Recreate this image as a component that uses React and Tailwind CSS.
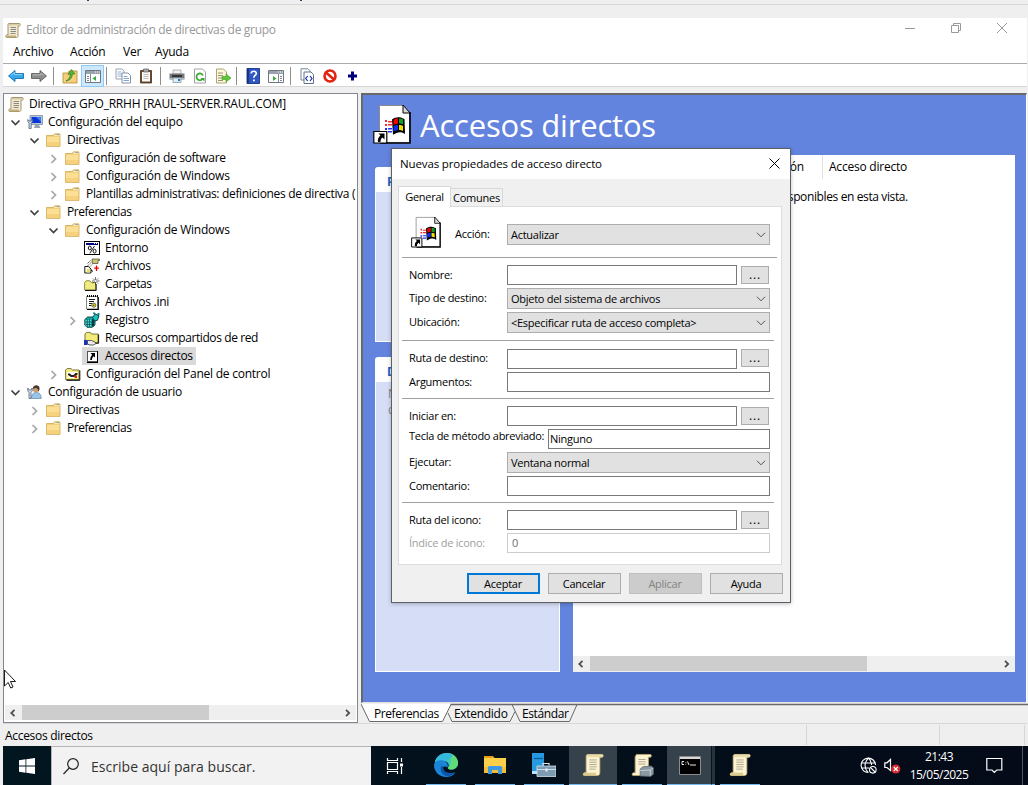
import React from "react";

/* ---------- shared icons ---------- */

function Scroll({ className }) {
  return (
    <svg viewBox="0 0 24 26" className={className}>
      <path d="M6 1.500h16c1.500 0 1.700 2.500 0 3h-2.500v16.500c0 2.500-1 3.500-2.500 3.500H2.500c-1.500 0-1.700-2.500 0-3H4.500V4c0-1.500.5-2.500 1.500-2.500z" fill="#fbf3d2" stroke="#bfac74" strokeWidth="0.9" />
      <path d="M6 1.500c-1 .8-1 2 0 3h16c1-.5 1-2.500 0-3z" fill="#e9dcab" />
      <path d="M2.500 21.500h13c-.6 1 0 2.600 1.500 3H2.500c-1.500-.5-1.500-2.500 0-3z" fill="#dccb8d" />
      <path d="M8 7.500h8M8 10h8M8 12.500h8M8 15h8M8 17.500h7" stroke="#a9a28c" strokeWidth="1" />
    </svg>
  );
}

function SmallScroll() {
  return (
    <svg viewBox="0 0 16 17" className="h-[17px] w-4">
      <path d="M4 1.500h10.500c1 0 1 2.500 0 2.500H13v9.500c0 1.500-.7 2-1.500 2H1.500c-1 0-1-2.500 0-2.500H3V3c0-1 .3-1.500 1-1.500z" fill="#f3ead0" stroke="#9a8b64" strokeWidth="0.9" />
      <path d="M4 2h10.500v1.500H4z" fill="#d8cba2" />
      <path d="M1.500 13.500h9.500v1.700H1.500z" fill="#c3b078" />
      <path d="M5.500 5.500h5.500M5.500 7.500h5.500M5.500 9.500h5.500M5.500 11.500h5" stroke="#7d7d80" strokeWidth="0.9" />
    </svg>
  );
}

function Folder() {
  return (
    <svg viewBox="0 0 16 16" className="h-4 w-4">
      <path d="M.5 3.500H7l1.500-2h5v12.500h-13z" fill="#e9bf62" />
      <path d="M8 2h6v2H8z" fill="#f7e7b5" />
      <path d="M10.500 2H13v1h-2.500z" fill="#4aa3e8" />
      <path d="M.5 4.500h13.500v9H.5z" fill="#fbdf95" />
      <path d="M.5 10h13.500v3.500H.5z" fill="#f7d27e" />
      <path d="M.4 3.500h7l1-1.500H14v12.500H.4z" fill="none" stroke="#d6aa50" strokeWidth="0.8" />
    </svg>
  );
}

function ComputerIcon() {
  return (
    <svg viewBox="0 0 16 16" className="h-4 w-4">
      <path d="M3 1.500h12.500v9H3z" fill="#b7c3d6" stroke="#7f8da5" strokeWidth="0.8" />
      <path d="M4.500 3H14v6H4.500z" fill="#0a35d8" />
      <path d="M9 3h5v5z" fill="#3e7cf2" />
      <path d="M8 11h4l1.500 3H7z" fill="#97a1b0" />
      <path d="M.8 5.500v2L2 9v5.500h2.200V9l1.300-1.500v-2L4.200 7H2z" fill="#c9d6e6" stroke="#506784" strokeWidth="0.8" />
    </svg>
  );
}

function UserIcon() {
  return (
    <svg viewBox="0 0 16 16" className="h-4 w-4">
      <path d="M4.500 14.500c0-4.500 2-6 4.700-6s5 1.500 5 6z" fill="#9cc3e8" stroke="#5c86ae" strokeWidth="0.7" />
      <circle cx="9" cy="5" r="3.200" fill="#c99a70" />
      <path d="M5.800 5c0-4.500 6.300-5 6.700-1 .2 2-.6 3-1.200 3.500 0-2-.8-3.300-2.700-3.500C7.200 4 6.800 5 5.800 5z" fill="#4a3a30" />
      <path d="M.8 4v3L2 8.500V14.500h2V8.500L5.200 7V4L4 6H2z" fill="#d5dfeb" stroke="#4f6680" strokeWidth="0.8" />
    </svg>
  );
}

function EnvIcon() {
  return (
    <svg viewBox="0 0 16 16" className="h-4 w-4">
      <path d="M.5 1.500h15v13H.5z" fill="#fff" stroke="#000" shapeRendering="crispEdges" />
      <path d="M2 3h12v1.500H2z" fill="#000084" shapeRendering="crispEdges" />
      <path d="M10 3h1v1h-1zM12 3h1v1h-1z" fill="#fff" />
      <path d="M10.500 6L5.800 13.300" stroke="#000" strokeWidth="0.9" />
      <ellipse cx="5.800" cy="8" rx="1.500" ry="1.900" fill="none" stroke="#000" strokeWidth="0.9" />
      <ellipse cx="10.600" cy="11.200" rx="1.500" ry="1.900" fill="none" stroke="#000" strokeWidth="0.9" />
    </svg>
  );
}

function FilesIcon() {
  return (
    <svg viewBox="0 0 16 16" className="h-4 w-4">
      <path d="M8 1h7.500v1.500H14v3H8.500z" fill="#c9c66b" stroke="#444" strokeWidth="0.7" />
      <path d="M6.500 2.500L3 6M7.500 4L3.500 8M8.500 6L5 9.500" stroke="#333" strokeWidth="0.8" strokeDasharray="1.500 .7" />
      <path d="M.8 8.500h3.500L7 11v4H.8z" fill="#fff" stroke="#000" strokeWidth="0.9" />
      <path d="M3 11h3v3.500H3z" fill="#e5df5e" />
      <path d="M12.500 7.500v5.500M10.200 10.200h4.600" stroke="#f00000" strokeWidth="1.300" />
      <path d="M7 12l2 1.500" stroke="#000" />
    </svg>
  );
}

function NewFolderIcon() {
  return (
    <svg viewBox="0 0 16 16" className="h-4 w-4">
      <path d="M.6 13.800V6.500L2 4.800h4L7.200 6.500h4.300v7.300z" fill="#f1ec82" stroke="#8a8530" strokeWidth="0.9" />
      <path d="M1 14.500h11.200V8" stroke="#000" strokeWidth="0.9" fill="none" />
      <path d="M11.500 1v8M8 5h7.500M9 2.500l5 5M14 2.500l-5 5" stroke="#333" strokeWidth="0.7" />
      <circle cx="11.500" cy="5" r="1.100" fill="#fff" />
    </svg>
  );
}

function IniIcon() {
  return (
    <svg viewBox="0 0 16 16" className="h-4 w-4">
      <path d="M2.500 2.500h11v12.500h-11z" fill="#fff" stroke="#777" strokeWidth="0.9" />
      <path d="M14.300 3v12.500H3" fill="none" stroke="#000" strokeWidth="1.100" />
      <path d="M3 2h11" stroke="#000" strokeDasharray="1 1" strokeWidth="1.800" />
      <path d="M5 5.500h6M5 7.500h5M5 9.500h3M5 11.500h2.500" stroke="#000" strokeWidth="0.9" />
      <circle cx="9.800" cy="11.200" r="2.100" fill="#e4da24" stroke="#555" strokeWidth="0.8" />
      <path d="M9.300 10.700h1v1h-1z" fill="#000" />
    </svg>
  );
}

function RegistryIcon() {
  return (
    <svg viewBox="0 0 16 16" className="h-4 w-4">
      <path d="M.8 7.500L3.500 5h4.700L11 6.500V13l-3 2.300H3L.8 13z" fill="#0fa9a9" stroke="#063c3c" strokeWidth="0.9" />
      <path d="M1.500 8h5.500v6.500H2.500L1.500 13z" fill="#4fdede" />
      <path d="M1 10h7M1.500 12.500h6.500M3.300 7v8M5.500 7v8" stroke="#0a5050" strokeWidth="0.8" />
      <path d="M8.500 5.500l2.700-3.700 3.800 2-1.500 4.400-3 1z" fill="#18c0c0" stroke="#053030" strokeWidth="0.9" />
      <path d="M9 .5h2V2H9zM13.500 1h2v2h-2z" fill="#0d8585" />
      <path d="M8 7h2v7.500H8z" fill="#043e3e" />
    </svg>
  );
}

function ShareIcon() {
  return (
    <svg viewBox="0 0 16 16" className="h-4 w-4">
      <path d="M1 10V4l1.300-1.600h4L7.500 4H14v8.500H5z" fill="#f2eb7c" stroke="#6d6824" strokeWidth="0.9" />
      <path d="M14.600 4.500v8.800H11" stroke="#000" fill="none" strokeWidth="0.9" />
      <path d="M0 10h3.500v5H0z" fill="#1632c8" />
      <path d="M3.500 10.500h4l3.500 1.500 1 1.500L9.500 15H6l-2.500-.8z" fill="#ececec" stroke="#333" strokeWidth="0.8" />
    </svg>
  );
}

function ShortcutIcon() {
  return (
    <svg viewBox="0 0 16 16" className="h-4 w-4">
      <path d="M3.500 3.500h9.500v10h-9.500z" fill="#fff" stroke="#555" shapeRendering="crispEdges" />
      <path d="M3 14h10.500V3" fill="none" stroke="#000" shapeRendering="crispEdges" />
      <path d="M6.500 5H11v4.500L9.700 8.200C8.500 9 8 10 8 12H6.200c0-2.500.6-3.900 2-5.100z" fill="#000" />
    </svg>
  );
}

function PanelIcon() {
  return (
    <svg viewBox="0 0 16 16" className="h-4 w-4">
      <path d="M.6 13.500V4L2 2.600h4L7.500 4H14v9.500z" fill="#f5ef86" stroke="#6d6824" strokeWidth="0.9" />
      <path d="M14.800 4.500v9.800H1.500" stroke="#000" fill="none" />
      <path d="M2.500 6h10v6h-10z" fill="#fff" />
      <path d="M3 7.500h2l1.500 1.500h2l2-2h2v1.500L9 11H6L3 9z" fill="#222" />
      <path d="M9.500 9.500H12V12H9.500z" fill="#e02020" />
    </svg>
  );
}

function BigShortcut({ className }) {
  return (
    <svg viewBox="0 0 38 40" className={className}>
      <path d="M6.500 1.500h24l6 7V38.500h-30z" fill="#fff" stroke="#8a8a8a" />
      <path d="M37 8v31H7" fill="none" stroke="#000" strokeWidth="1.600" />
      <path d="M30 1v8h7z" fill="#d8d8d8" stroke="#000" strokeWidth="1" />
      <path d="M19 15.500c3-2.500 8-3 11-1l1.500.5.500 15c-3.500-2.500-7-2.500-12 .8z" fill="#000" />
      <path d="M20.500 16c1.500-1.200 3-1.600 4.500-1.500v5.200c-1.500 0-3 .4-4.500 1.300z" fill="#f00000" />
      <path d="M26 14.500c1.500 0 3 .4 4 1v5c-1.200-.7-2.500-.9-4-.9z" fill="#10a020" />
      <path d="M20.500 22.300c1.500-1 3-1.400 4.500-1.400v5c-1.500 0-3 .5-4.500 1.500z" fill="#1030f0" />
      <path d="M26 20.900c1.500 0 3 .3 4 1v5c-1.200-.6-2.500-1-4-1z" fill="#f4e000" />
      <path d="M12 16h2v2h-2zM12 20h2v2h-2zM15 17h4v1.500h-4zM15 20h4v1.500h-4z" fill="#f03030" />
      <path d="M12 24h2v2h-2zM12 28h2v2h-2zM15 24h4v1.500h-4zM15 27h4v1.500h-4z" fill="#2030f0" />
      <path d="M.8 27.500h13v11.500H.8z" fill="#fff" stroke="#000" strokeWidth="1.200" />
      <path d="M5.500 29.500h6v6l-2-2c-1.500 1-2 2.500-2 4.500h-2.500c-.5-3 .5-5 2.500-6.500z" fill="#000" />
    </svg>
  );
}

/* ---------- title bar, menu, toolbar ---------- */

function TitleBar() {
  return (
    <div className="flex h-[25px] items-center pb-px pl-0.5 text-[#999999]">
      <SmallScroll />
      <span className="ml-[5px] text-[12px] tracking-[-0.32px]">Editor de administración de directivas de grupo</span>
      <div className="ml-auto flex items-center gap-[34px] pr-[19px]">
        <svg viewBox="0 0 12 12" className="h-3 w-3 -translate-y-0.5"><path d="M1 6.500h10" stroke="#999" /></svg>
        <svg viewBox="0 0 12 12" className="h-3 w-3 -translate-y-0.5"><path d="M1.500 3.500h7v7h-7zM3.500 3.500v-2h7v7h-2" stroke="#999" fill="none" /></svg>
        <svg viewBox="0 0 12 12" className="h-3 w-3 -translate-y-0.5"><path d="M1 1l10 10M11 1L1 11" stroke="#999" fill="none" /></svg>
      </div>
    </div>
  );
}

function MenuBar() {
  return (
    <div className="flex h-[21px] items-center border-b border-[#ababab] pb-0.5 pl-2.5">
      <span className="w-[57px]">Archivo</span>
      <span className="w-[53px]">Acción</span>
      <span className="w-8">Ver</span>
      <span>Ayuda</span>
    </div>
  );
}

function Sep() {
  return <div className="ml-[3px] mr-[4px] h-[18px] w-px bg-[#8d8d8d]" />;
}

function Tool({ children }) {
  return (
    <div className="flex h-[22px] w-[23px] items-center justify-center">
      <svg viewBox="0 0 16 16" className="h-4 w-4">{children}</svg>
    </div>
  );
}

function Toolbar() {
  return (
    <div className="flex h-[23px] items-center border-b border-[#d7d7d7] pl-px pt-0.5">
      <Tool><path d="M.5 8L7 2.500v3h8.500v5H7v3z" fill="#35a8ee" stroke="#1b6da8" strokeWidth="0.9" /><path d="M3 7.500L6.500 4.500v2H14" stroke="#8ed6ff" fill="none" /></Tool>
      <Tool><path d="M15.500 8L9 2.500v3H.5v5H9v3z" fill="#8d8d8d" stroke="#5f5f5f" strokeWidth="0.9" /><path d="M2 6.800h8V5l3 2.500" stroke="#b8b8b8" fill="none" /></Tool>
      <Sep />
      <Tool>
        <path d="M1 5h5l1-2h8v12H1z" fill="#f3cf7b" stroke="#bd943e" strokeWidth="0.9" />
        <path d="M4 13c2-1 4-3 4.500-7L6 6.500 9.500 1.500 13 6l-2.500-.3C10 10 8 12.500 4 13z" fill="#50b93a" stroke="#2f7e20" strokeWidth="0.7" />
      </Tool>
      <div className="flex h-[22px] w-[23px] items-center justify-center border border-[#90c8f6] bg-[#cce8ff]">
        <svg viewBox="0 0 16 16" className="h-4 w-4">
          <path d="M.5 2.500h15v12H.5z" fill="#fff" stroke="#6f7780" /><path d="M1 3h14v3H1z" fill="#9aa3ad" /><path d="M10 4h1M12 4h1M14 4h1" stroke="#fff" />
          <path d="M5.500 6v8M2 8.500h2M2 10.500h2M2 12.500h2" stroke="#7f8790" /><path d="M11 8v5L7.500 10.500z" fill="#36a93c" />
        </svg>
      </div>
      <div className="-ml-px"><Sep /></div>
      <Tool>
        <path d="M1 1h6l2 2v8H1z" fill="#fff" stroke="#8a98a8" strokeWidth="0.9" /><path d="M2.500 4h4M2.500 6h5M2.500 8h5" stroke="#7da0cc" strokeWidth="0.8" />
        <path d="M7 5h6l2.500 2.500V15H7z" fill="#fff" stroke="#78889a" strokeWidth="0.9" /><path d="M8.500 8.500h4M8.500 10.500h5.500M8.500 12.500h5.500" stroke="#5f8fc8" strokeWidth="0.8" />
      </Tool>
      <Tool>
        <path d="M2.500 2.500h11v12.500h-11z" fill="#6b4a2c" stroke="#4a3018" strokeWidth="0.8" /><path d="M4 4h8v9.500H4z" fill="#fafafa" /><path d="M5.500 1h5v3h-5z" fill="#a9a9a9" stroke="#555" strokeWidth="0.7" />
        <path d="M5.500 6.500h5M5.500 8.500h5M5.500 10.500h5" stroke="#aaa" strokeWidth="0.8" />
      </Tool>
      <Sep />
      <Tool>
        <path d="M4 2h8v4H4z" fill="#f0f0f0" stroke="#999" strokeWidth="0.7" /><path d="M.5 5.500h15v6H.5z" fill="#74797e" /><path d="M3 7h10v2H3z" fill="#33373b" /><path d="M1 10h14v1H1z" fill="#b8bcc0" />
        <path d="M4 10h8v4.500H4z" fill="#d8ecfa" stroke="#888" strokeWidth="0.7" /><path d="M9 11h2v2H9z" fill="#1a7ac8" />
      </Tool>
      <Tool>
        <path d="M2.500 1h8l3 3v11h-11z" fill="#fff" stroke="#999" strokeWidth="0.9" />
        <path d="M11 7.500A3.400 3.400 0 1 0 10.500 11" fill="none" stroke="#35a82e" strokeWidth="1.700" /><path d="M8.500 10h4v3.500z" fill="#35a82e" />
      </Tool>
      <Tool>
        <path d="M1.500 1h7l3 3v11h-10z" fill="#fdf7d7" stroke="#a39a6d" strokeWidth="0.9" /><path d="M3 5h5M3 7.500h5M3 10h4M3 12.500h5" stroke="#8c866a" strokeWidth="0.9" />
        <path d="M7 8.500h4V6l5 4-5 4v-2.500H7z" fill="#5cc63b" stroke="#3c9a22" strokeWidth="0.6" />
      </Tool>
      <div className="-ml-px"><Sep /></div>
      <Tool>
        <path d="M2 .5h12.500v15H2z" fill="#2f57c4" stroke="#1b3480" strokeWidth="0.9" /><path d="M2 .5h1.800v15H2z" fill="#173079" />
        <path d="M6.200 5.500C6.300 2.500 11.500 2.500 11.300 5.500c-.1 2-2.500 2-2.500 4.300" fill="none" stroke="#fff" strokeWidth="1.700" /><path d="M8 11.500h1.800v1.700H8z" fill="#fff" />
      </Tool>
      <Tool>
        <path d="M.5 2.500h15v12H.5z" fill="#fff" stroke="#6f7780" /><path d="M1 3h14v3H1z" fill="#9aa3ad" /><path d="M10 4h1M12 4h1M14 4h1" stroke="#fff" />
        <path d="M10.500 6v8M12 8.500h2M12 10.500h2M12 12.500h2" stroke="#7f8790" /><path d="M5 8v5l3.500-2.500z" fill="#36a93c" />
      </Tool>
      <Sep />
      <Tool>
        <path d="M2 .8h7l2 2V12H2z" fill="#fff" stroke="#677a90" strokeWidth="0.9" /><path d="M5 4h7l2.500 2.500V15.500H5z" fill="#fff" stroke="#506378" strokeWidth="0.9" />
        <path d="M8.700 8L6.700 10.500l2 2.500M11 8l2 2.500L11 13" fill="none" stroke="#1531a6" strokeWidth="1.200" />
      </Tool>
      <Tool>
        <circle cx="8" cy="8" r="5.500" fill="#fff" stroke="#e3220f" strokeWidth="2.600" /><path d="M4 4.500L12 11.500" stroke="#e3220f" strokeWidth="2.600" />
      </Tool>
      <Tool><path d="M7.500 3.500v9M3 8h9" stroke="#00007f" strokeWidth="3" /></Tool>
    </div>
  );
}

/* ---------- tree ---------- */

function Chevron({ open }) {
  return open ? (
    <svg viewBox="0 0 11 11" className="h-[11px] w-[11px]"><path d="M1.500 3.500l4 4 4-4" fill="none" stroke="#404040" strokeWidth="1.700" /></svg>
  ) : (
    <svg viewBox="0 0 11 11" className="h-[11px] w-[11px]"><path d="M3.500 2l4 4-4 4" fill="none" stroke="#a6a6a6" strokeWidth="1.700" /></svg>
  );
}

const INDENT = ["pl-0", "pl-[5px]", "pl-6", "pl-[43px]", "pl-[62px]"];

const TREE = [
  { level: 1, open: true, Icon: ComputerIcon, label: "Configuración del equipo" },
  { level: 2, open: true, Icon: Folder, label: "Directivas" },
  { level: 3, open: false, Icon: Folder, label: "Configuración de software", tracking: "tracking-[-0.3px]" },
  { level: 3, open: false, Icon: Folder, label: "Configuración de Windows" },
  { level: 3, open: false, Icon: Folder, label: "Plantillas administrativas: definiciones de directiva (", tracking: "tracking-[-0.33px]" },
  { level: 2, open: true, Icon: Folder, label: "Preferencias", tracking: "tracking-[-0.45px]" },
  { level: 3, open: true, Icon: Folder, label: "Configuración de Windows" },
  { level: 4, Icon: EnvIcon, label: "Entorno" },
  { level: 4, Icon: FilesIcon, label: "Archivos" },
  { level: 4, Icon: NewFolderIcon, label: "Carpetas", tracking: "tracking-[-0.4px]" },
  { level: 4, Icon: IniIcon, label: "Archivos .ini" },
  { level: 4, open: false, Icon: RegistryIcon, label: "Registro" },
  { level: 4, Icon: ShareIcon, label: "Recursos compartidos de red", tracking: "tracking-[-0.4px]" },
  { level: 4, Icon: ShortcutIcon, label: "Accesos directos", selected: true, tracking: "tracking-[-0.3px]" },
  { level: 3, open: false, Icon: PanelIcon, label: "Configuración del Panel de control" },
  { level: 1, open: true, Icon: UserIcon, label: "Configuración de usuario", tracking: "tracking-[-0.28px]" },
  { level: 2, open: false, Icon: Folder, label: "Directivas" },
  { level: 2, open: false, Icon: Folder, label: "Preferencias", tracking: "tracking-[-0.45px]" },
];

function TreeRow({ level, open, Icon, label, selected, tracking = "tracking-[-0.24px]" }) {
  return (
    <div className={`flex h-[18px] items-center whitespace-nowrap ${INDENT[level]}`}>
      <span className="w-[11px] shrink-0">{open !== undefined && <Chevron open={open} />}</span>
      <span className={`ml-1 flex h-[18px] items-center gap-[5px] pl-[2px] pr-[3px] ${selected ? "bg-[#d9d9d9]" : ""}`}>
        <Icon />
        <span className={tracking}>{label}</span>
      </span>
    </div>
  );
}

function TreePane() {
  return (
    <div className="flex w-[355px] shrink-0 flex-col border border-[#828790] bg-white p-px">
      <div className="flex-1 overflow-hidden">
        <div className="flex h-[18px] items-center gap-[5px] pl-[3px]">
          <SmallScroll />
          <span className="tracking-[-0.22px]">Directiva GPO_RRHH [RAUL-SERVER.RAUL.COM]</span>
        </div>
        {TREE.map((row, i) => (
          <TreeRow key={i} {...row} />
        ))}
      </div>
      <ScrollBar thumb="w-[187px]" />
      <div className="h-px" />
    </div>
  );
}

function ScrollBar({ thumb }) {
  return (
    <div className="flex h-[15px] shrink-0 items-center bg-[#efefef]">
      <div className="flex w-[17px] justify-center pr-1"><svg viewBox="0 0 8 8" className="h-2 w-2"><path d="M6.500 .8L3.300 4l3.200 3.200" fill="none" stroke="#505050" strokeWidth="1.800" /></svg></div>
      <div className={`h-[15px] bg-[#cdcdcd] ${thumb}`} />
      <div className="ml-auto flex w-[17px] justify-center"><svg viewBox="0 0 8 8" className="h-2 w-2"><path d="M2 .8L5.200 4 2 7.200" fill="none" stroke="#505050" strokeWidth="1.800" /></svg></div>
    </div>
  );
}

/* ---------- right pane ---------- */

function ResultPane() {
  return (
    <div className="flex h-[610px] flex-col border-b border-l-2 border-r border-t-2 border-[#696969] border-b-[#e3e3e3] border-r-white bg-[#6384de]">
      <div className="flex h-[60px] items-center pl-[10px] text-white">
        <BigShortcut className="mb-[3px] h-10 w-[38px]" />
        <h1 className="ml-[9px] text-[31px] leading-none tracking-[-0.2px]">Accesos directos</h1>
      </div>
      <div className="flex">
        <div className="ml-[12px] mt-[12px] flex w-[185px] flex-col gap-[15px]">
          <InfoCard title="Procesamiento" body="h-[149px]" />
          <InfoCard title="Descripción" body="h-[289px]">
            No hay ninguna<br />directiva seleccionada.
          </InfoCard>
        </div>
        <div className="ml-[13px] flex h-[517px] w-[442px] flex-col bg-white">
          <div className="flex h-[24px] items-center">
            <span className="flex h-full w-[250px] items-center justify-end border-r border-[#e0e0e0] pr-[18px]">Ruta de ubicación</span>
            <span className="pl-1.5 tracking-[-0.22px]">Acceso directo</span>
          </div>
          <div className="mt-[10px] flex-1 text-center tracking-[-0.38px]">No hay elementos disponibles en esta vista.</div>
          <ScrollBar thumb="w-[277px]" />
          <div className="h-px bg-[#efefef]" />
        </div>
      </div>
    </div>
  );
}

function InfoCard({ title, body, children }) {
  return (
    <div className="overflow-hidden rounded-tl-[3px] rounded-tr-[3px] bg-white">
      <div className="flex h-[25px] items-center pl-3 pt-1 font-bold text-[#215dc6]">{title}</div>
      <div className={`mx-px mb-px bg-[#d6ddf7] pl-3 pt-1 leading-4 text-[#848484] ${body}`}>{children}</div>
    </div>
  );
}

function ViewTabs() {
  return (
    <div className="relative h-[20px]">
      <svg viewBox="0 0 667 20" className="absolute left-0 top-0 h-5 w-[667px]" fill="none">
        <path d="M0 1L8.500 19h73L90 1z" fill="#fff" />
        <path d="M89.500 1.500H667" stroke="#69696d" strokeWidth="1.500" />
        <path d="M0 1l8.500 17.500h73L90 1.500" stroke="#696969" />
        <path d="M87 10l4 8.500h58l5-10M151 1.500l8 17h49.500l7.500-17" stroke="#696969" />
      </svg>
      <div className="relative flex h-full items-center pt-px">
        <span className="ml-[13px] w-[80px] tracking-[-0.42px]">Preferencias</span>
        <span className="w-[68px] tracking-[-0.3px]">Extendido</span>
        <span className="tracking-[-0.4px]">Estándar</span>
      </div>
    </div>
  );
}

/* ---------- dialog ---------- */

function Row({ label, className = "", labelClass = "w-[98px]", children }) {
  return (
    <div className={`flex items-start pl-2.5 ${className}`}>
      <span className={`shrink-0 whitespace-nowrap leading-5 ${labelClass}`}>{label}</span>
      {children}
    </div>
  );
}

function Select({ value }) {
  return (
    <div className="flex h-[21px] w-[263px] items-center justify-between border border-[#adadad] bg-[#e1e1e1] px-[3px]">
      <span className="pt-px">{value}</span>
      <svg viewBox="0 0 10 6" className="h-[6px] w-[10px]"><path d="M1 .8l4 4 4-4" fill="none" stroke="#505050" /></svg>
    </div>
  );
}

function Input({ width, value, className = "border-[#7a7a7a]" }) {
  return <div className={`flex h-5 items-center border bg-white ${width} ${className}`}>{value}</div>;
}

function Browse({ className = "mt-px" }) {
  return <div className={`ml-1 flex h-[18px] w-7 items-center justify-center border border-[#adadad] bg-[#e1e1e1] text-[12px] tracking-[0.8px] ${className}`}>...</div>;
}

function Rule({ className }) {
  return <div className={`ml-[3px] h-px bg-[#a0a0a0] ${className}`} />;
}

function Button({ children, className = "border border-[#adadad] bg-[#e1e1e1]" }) {
  return <div className={`flex h-[21px] w-[73px] items-center justify-center pr-px ${className}`}>{children}</div>;
}

function Dialog() {
  return (
    <div className="absolute left-[391px] top-[148px] flex h-[455px] w-[400px] flex-col border border-[#5c6067] bg-[#f0f0f0] text-[11px] tracking-[-0.27px] shadow-[0_1px_4px_rgba(0,0,0,0.25)]">
      <div className="flex h-[30px] items-center justify-between bg-white pl-2 pr-[10px]">
        <span className="text-[11.500px] tracking-[-0.13px]">Nuevas propiedades de acceso directo</span>
        <svg viewBox="0 0 11 11" className="h-[11px] w-[11px] -translate-y-px"><path d="M.5 .5l10 10M10.500 .5l-10 10" stroke="#000" /></svg>
      </div>
      <div className="mt-[7px] flex h-[20px] items-end pl-[6px]">
        <div className="relative z-10 -mb-px flex h-[21px] w-[53px] items-center justify-center border border-b-0 border-[#d9d9d9] bg-white pb-px">General</div>
        <div className="flex h-[18px] w-[52px] items-center justify-center border border-b-0 border-l-0 border-[#d9d9d9]">Comunes</div>
      </div>
      <div className="ml-[6px] flex h-[359px] w-[384px] flex-col border border-[#dcdcdc] bg-white">
        <div className="flex h-[50px] items-start pl-3">
          <BigShortcut className="mt-[9px] h-8 w-[30px]" />
          <span className="ml-[14px] mt-[17px] w-[52px] leading-5">Acción:</span>
          <div className="mt-[17px]"><Select value="Actualizar" /></div>
        </div>
        <Rule className="w-[375px]" />
        <Row label="Nombre:" className="mt-[7px]"><Input width="w-[230px]" /><Browse /></Row>
        <Row label="Tipo de destino:" className="mt-[3px]"><Select value="Objeto del sistema de archivos" /></Row>
        <Row label="Ubicación:" className="mt-[3px]"><Select value="<Especificar ruta de acceso completa>" /></Row>
        <Rule className="mt-[7px] w-[372px]" />
        <Row label="Ruta de destino:" className="mt-[8px]" labelClass="w-[98px] -mt-px"><Input width="w-[230px]" /><Browse className="mt-0" /></Row>
        <Row label="Argumentos:" className="mt-[3px]"><Input width="w-[263px]" /></Row>
        <Rule className="mt-[6px] w-[372px]" />
        <Row label="Iniciar en:" className="mt-[7px]"><Input width="w-[230px]" /><Browse /></Row>
        <Row label="Tecla de método abreviado:" className="mt-[3px] h-5" labelClass="w-[139px] -mt-[3px]"><Input width="w-[222px]" value={<span className="pl-px">Ninguno</span>} /></Row>
        <Row label="Ejecutar:" className="mt-[3px]"><Select value="Ventana normal" /></Row>
        <Row label="Comentario:" className="mt-[3px]"><Input width="w-[263px]" /></Row>
        <Rule className="mt-[6px] w-[372px]" />
        <Row label="Ruta del icono:" className="mt-[7px]"><Input width="w-[230px]" /><Browse /></Row>
        <Row label="Índice de icono:" className="mt-[3px]" labelClass="w-[98px] text-[#a0a0a0]"><Input width="w-[263px]" className="border-[#cccccc] text-[#6d6d6d]" value={<span className="pl-1">0</span>} /></Row>
      </div>
      <div className="mt-2 flex justify-end gap-2 pr-[7px]">
        <Button className="border-2 border-[#0078d7] bg-[#e1e1e1]">Aceptar</Button>
        <Button>Cancelar</Button>
        <Button className="border border-[#bfbfbf] bg-[#cccccc] text-[#838383]">Aplicar</Button>
        <Button>Ayuda</Button>
      </div>
    </div>
  );
}

/* ---------- status bar and taskbar ---------- */

function StatusBar() {
  return (
    <div className="flex h-[23px] items-center border-t border-[#d7d7d7] pl-0.5">
      <span className="w-[801px] pt-0.5 tracking-[-0.3px]">Accesos directos</span>
      <div className="h-5 w-[133px] border-l border-[#d7d7d7]" />
      <div className="h-5 w-[86px] border-x border-[#d7d7d7]" />
    </div>
  );
}

function TaskButton({ children, width = "w-10", active, className = "" }) {
  return (
    <div className={`flex h-[39px] shrink-0 items-center justify-center border-b border-[#76b9ed] ${width} ${active ? "bg-[#35414b]" : ""} ${className}`}>
      {children}
    </div>
  );
}

function Taskbar() {
  return (
    <div className="ml-[3px] flex h-[39px] items-stretch bg-gradient-to-r from-[#021620] to-[#040a18] text-white">
      <div className="flex w-12 items-center justify-center">
        <svg viewBox="0 0 16 16" className="h-4 w-4" fill="#fff"><path d="M0 2.200L6.500 1.300V7.600H0zM7.300 1.200L16 0v7.600H7.300zM0 8.400h6.500v6.300L0 13.800zM7.300 8.400H16V16l-8.700-1.200z" /></svg>
      </div>
      <div className="flex w-[320px] items-center border-l border-t border-[#b5b5b5] bg-[#f2f2f2] pl-[11px] text-[#333]">
        <svg viewBox="0 0 16 17" className="h-[17px] w-4" fill="none" stroke="#222" strokeWidth="1.200"><circle cx="10" cy="6" r="5.300" /><path d="M6.300 10L.5 16" /></svg>
        <span className="ml-3 pt-0.5 text-[14px] tracking-[0.03px]">Escribe aquí para buscar.</span>
      </div>
      <div className="flex w-12 items-center justify-center">
        <svg viewBox="0 0 18 16" className="h-4 w-[18px]" fill="none" stroke="#fff" strokeWidth="1.200"><path d="M1.500 0v2.500h10V0M1.500 4.500h10v7h-10zM1.500 16v-2.500h10V16M15.500 0v4M15.500 9v7" /><path d="M14 5.500h3v3h-3z" fill="#fff" stroke="none" /></svg>
      </div>
      <TaskButton className="ml-[7px]">
        <svg viewBox="0 0 24 24" className="h-6 w-6">
          <path d="M1 9C2.500 3.500 7 0 12.500 0 19 0 24 4.500 24 10c0 4-3 6.500-6.500 6.500-3 0-4-1-3.500-2 1.500-2 .5-6.500-4.500-6.500-4 0-7 1.500-8.500 4z" fill="#3cc8c0" />
          <path d="M13 0c6.500.2 11 4.500 11 10 0 4-3 6.500-6.500 6.500-3 0-4-1-3.500-2C18 12 18 4 13 0z" fill="#5fdc75" />
          <path d="M1 9C2 3.500 7 0 12.500 0c3 0 5 1 6.500 2-2 4-6 5.500-9.500 6C5 8 2 10 1 12z" fill="#35b9dd" />
          <path d="M0 12c0-3 4-5.500 9-4.500 4 .6 5.500 4 4.500 7-2-2-6-1-6 2 0 4 6 6.500 13.500 3.500C18.500 23 15.500 24 12 24 5.500 24 0 19 0 12z" fill="#1a84d8" />
          <path d="M7.500 12.500c-2.500 5 1 11 7 10.500 3-.2 5-1.500 7-4-7 2.500-12.500-.5-12-4z" fill="#0d55a8" />
        </svg>
      </TaskButton>
      <TaskButton className="ml-[9px]">
        <svg viewBox="0 0 22 20" className="h-5 w-[22px]">
          <path d="M0 1h9l2 2.500H0z" fill="#e0a01c" /><path d="M0 3h22v15H0z" fill="#ffcf4a" /><path d="M0 12h22v6H0z" fill="#f8bd38" />
          <path d="M4 19v-6.500c0-1 .8-1.500 1.500-1.500h11c.8 0 1.500.5 1.500 1.500V19h-4v-4H8v4z" fill="#3c9be0" />
        </svg>
      </TaskButton>
      <TaskButton className="ml-[9px]">
        <svg viewBox="0 0 24 24" className="h-6 w-6">
          <path d="M0 0h12v21H0z" fill="#2699e0" /><path d="M2 5.500h9" stroke="#0d5c98" strokeWidth="1.300" /><path d="M0 18h8v3H0z" fill="#bde3f8" />
          <path d="M11 12.500v-2h6v2" fill="none" stroke="#dde7ee" strokeWidth="1.200" /><path d="M5 13h19v10.500H5z" fill="#7d9bb2" stroke="#d5e2eb" strokeWidth="0.8" />
          <path d="M5 16.500h19" stroke="#d5e2eb" strokeWidth="0.9" /><path d="M13.500 15.500h2v3h-2z" fill="#e9f1f6" />
        </svg>
      </TaskButton>
      <TaskButton active width="w-12" className="ml-[5px]"><Scroll className="h-6 w-[22px]" /></TaskButton>
      <TaskButton className="ml-[5px]">
        <svg viewBox="0 0 24 26" className="h-6 w-[22px] overflow-visible">
          <path d="M6 1.500h15c1.500 0 1.700 2.500 0 3h-2v20H2.500c-1.500 0-1.700-2.500 0-3H4.500V4z" fill="#fbf3d2" stroke="#b9a468" />
          <path d="M8 7h8M8 9.500h8M8 12h8" stroke="#a9a28c" />
          <path d="M10 17.500l3-2.500 9-1 2.500 2v7l-3 2.500L10 25z" fill="#8a98a3" stroke="#54616b" strokeWidth="0.8" /><path d="M10 19l11-.5 3-2M21 18.500v6" stroke="#c9d3da" fill="none" />
        </svg>
      </TaskButton>
      <TaskButton active width="w-[44px]" className="ml-[5px]">
        <svg viewBox="0 0 22 19" className="ml-0.5 h-[19px] w-[22px]"><path d="M.5 .5h21v18H.5z" fill="#000" stroke="#8c8c8c" /><path d="M1 1h20v2H1z" fill="#d7d7d7" /><path d="M5 5.500H3v3h2M6.800 6v.6M6.800 7.800v.7M8.500 5.500l1.500 3.500M11 9h6" fill="none" stroke="#fff" strokeWidth="0.9" /></svg>
      </TaskButton>
      <div className="h-[39px] w-1 border-b border-l border-b-[#76b9ed] border-l-[#0a141c] bg-[#26323c]" />
      <TaskButton className="ml-[5px]"><Scroll className="h-6 w-[22px]" /></TaskButton>
      <div className="ml-auto flex items-center">
        <svg viewBox="0 0 17 17" className="h-[17px] w-[17px]" fill="none" stroke="#fff" strokeWidth="1.100">
          <path d="M15.500 8A7.200 7.200 0 1 0 8.500 15.500M8.500 1C4 5 4 11.500 8 15.500M8.500 1c2 2 3 4.500 3 7M1 6h14.500M1 11h8" />
          <circle cx="12.800" cy="12.800" r="3.300" /><path d="M10.500 10.500l4.500 4.500" />
        </svg>
        <svg viewBox="0 0 17 17" className="ml-[7px] h-[17px] w-[17px]" fill="none" stroke="#fff" strokeWidth="1.200">
          <path d="M6.500 2.500v11L3 10.500H.8V5.800H3z" /><circle cx="11.800" cy="12" r="4.600" fill="#d62a2f" stroke="none" /><path d="M9.800 10l4 4M13.800 10l-4 4" />
        </svg>
        <div className="ml-[8px] w-[60px] whitespace-nowrap text-center text-[12px] leading-[18px] tracking-[-0.5px]">21:43<br />15/05/2025</div>
        <svg viewBox="0 0 17 17" className="ml-[17px] h-[17px] w-[17px]" fill="none" stroke="#fff" strokeWidth="1.200"><path d="M.8 1.500h15v11.500h-5l-2.500 2.500L6 13H.8z" /></svg>
        <div className="ml-[19px] mr-[5px] h-[39px] w-px bg-[#50585f]" />
      </div>
    </div>
  );
}

function Cursor() {
  return (
    <svg viewBox="0 0 12 20" className="absolute left-[4px] top-[669px] h-5 w-3">
      <path d="M.5 1v16l3.700-3.500L6.700 19l2.300-1-2.500-5.500h5z" fill="#fff" stroke="#000" strokeWidth="0.9" />
    </svg>
  );
}

export default function App() {
  return (
    <div className="relative flex h-[785px] w-[1028px] flex-col overflow-hidden bg-[#efefef] font-['Open_Sans',sans-serif] text-[12px] leading-4 tracking-[-0.2px] text-black">
      <div className="flex h-[5px] items-start border-b border-[#d7d7d7]">
        <div className="ml-[87px] h-px w-0.5 bg-[#33406b]" />
        <div className="ml-[211px] h-px w-0.5 bg-[#33406b]" />
      </div>
      <div className="ml-[3px] mr-px mt-[13px] flex h-[728px] flex-col">
        <div className="bg-white">
          <TitleBar />
          <MenuBar />
          <Toolbar />
        </div>
        <div className="mt-[6px] flex h-[630px]">
          <TreePane />
          <div className="ml-[3px] flex w-[666px] flex-col">
            <ResultPane />
            <ViewTabs />
          </div>
        </div>
        <StatusBar />
      </div>
      <Taskbar />
      <Dialog />
      <Cursor />
    </div>
  );
}
